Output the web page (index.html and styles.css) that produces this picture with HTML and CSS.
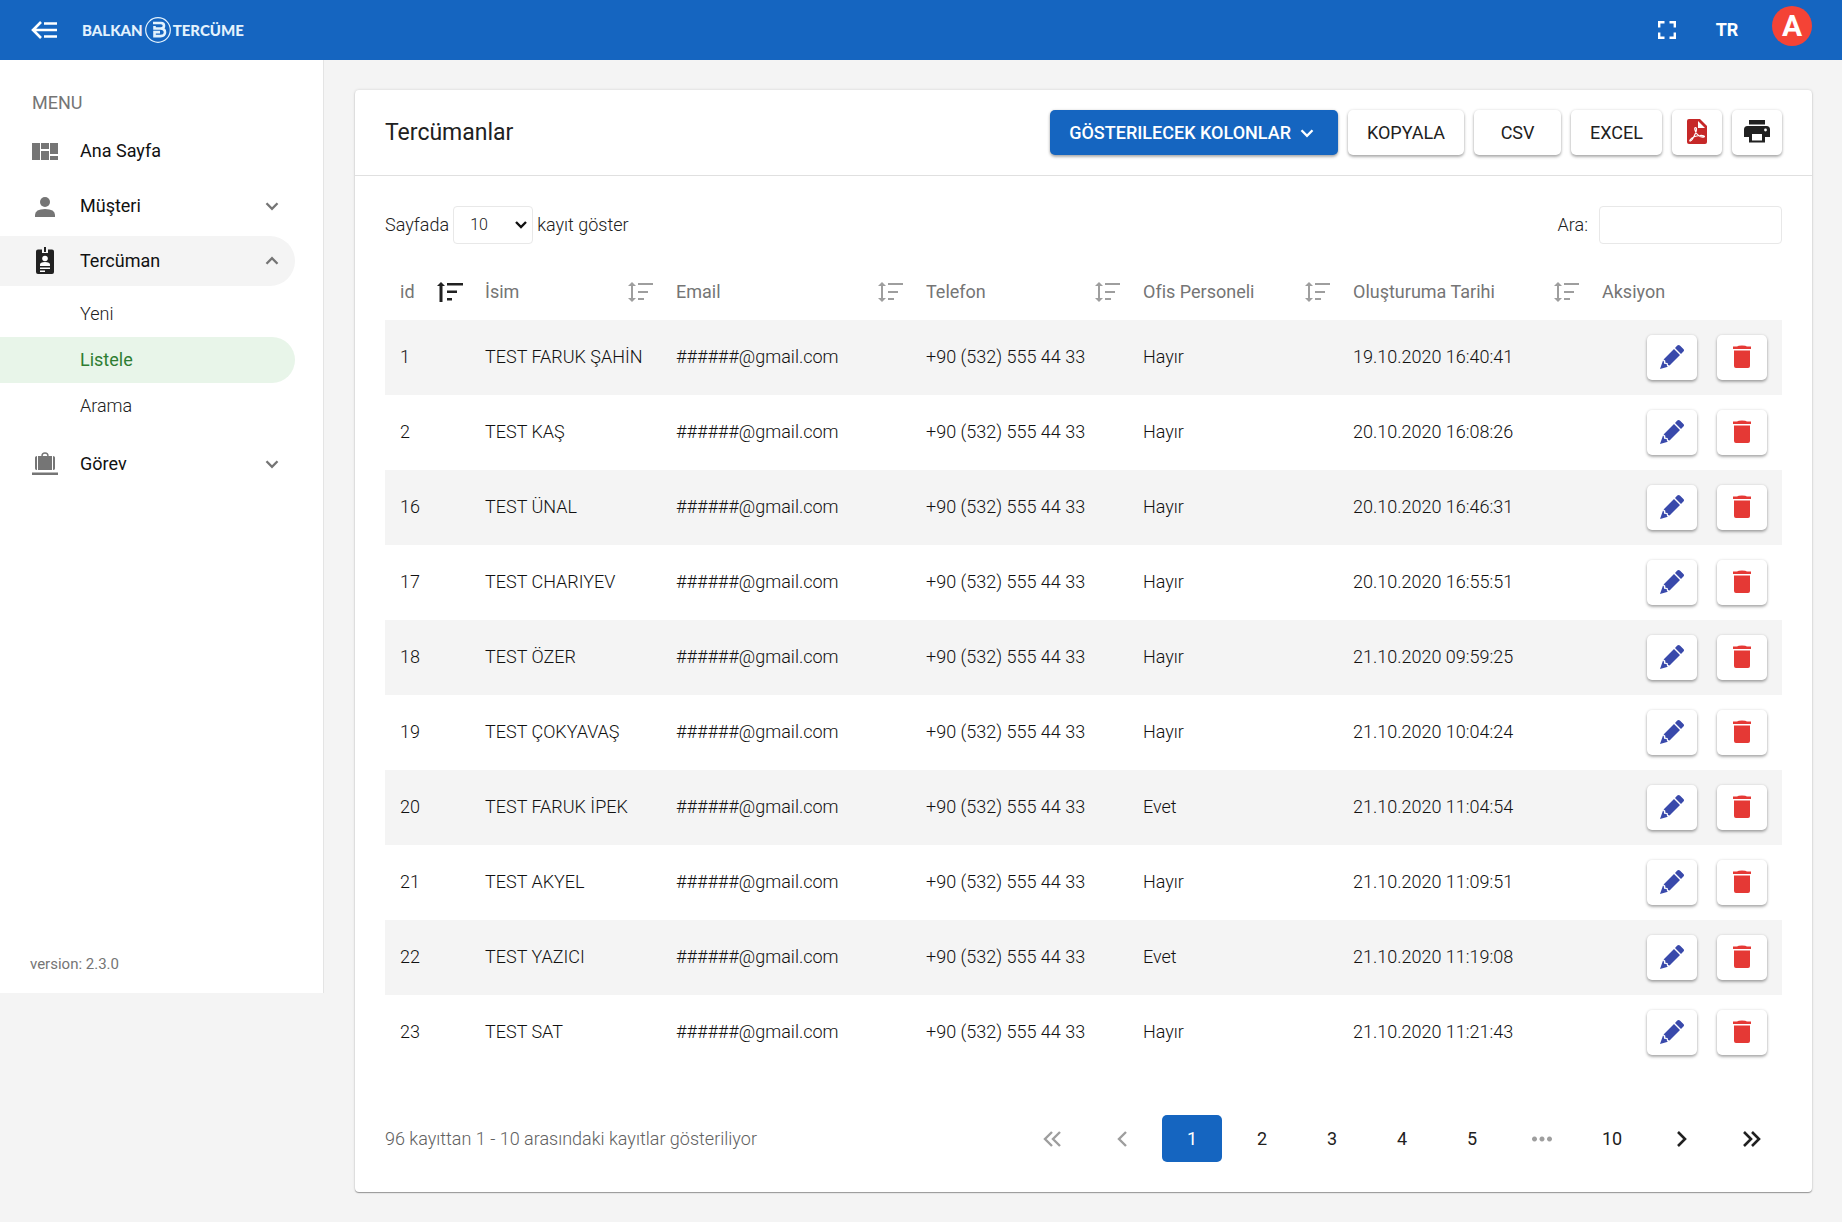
FILE: index.html
```
<!DOCTYPE html>
<html lang="tr">
<head>
    <meta charset="UTF-8">
    <meta name="viewport" content="width=device-width, initial-scale=1">
    <title>Tercümanlar</title>
    <link rel="stylesheet" href="styles.css">
</head>
<body>
<svg class="sprite" aria-hidden="true">
    <symbol id="i-down" viewBox="0 0 24 24"><path d="M6 9l6 6 6-6" fill="none" stroke="currentColor" stroke-width="2.6"/></symbol>
    <symbol id="i-up" viewBox="0 0 24 24"><path d="M6 15l6-6 6 6" fill="none" stroke="currentColor" stroke-width="2.6"/></symbol>
    <symbol id="i-sort" viewBox="0 0 26 20"><path d="M4 0l4 4H5v12h3l-4 4-4-4h3V4H0zM10 1h15v2H10zM10 9h10v2H10zM10 16h6v2h-6z" fill="currentColor"/></symbol>
    <symbol id="i-sort-up" viewBox="0 0 26 20"><path d="M4 0l4 4H5.500v16h-3V4H0zM10 1h16v2.500H10zM10 8.500h10V11H10zM10 16h5v2.500h-5z" fill="currentColor"/></symbol>
    <symbol id="i-edit" viewBox="0 0 24 24">
        <path d="M17.3.6a2 2 0 0 1 2.600 0l3.500 3.500a1.800 1.800 0 0 1 0 2.500L21 9 15 3z M14 4l6 6L9.500 20.500 8 20l-.4-2-2.100-.3-.3-2.200-1.700-1z M3 15.600l.8.6.3 2.600 2.500.3.4 2 .9.6L0 24z" fill="currentColor"/>
    </symbol>
    <symbol id="i-trash" viewBox="0 0 18 24"><path d="M4 1.500Q5 .5 9 .5t5 1h4V4H0V1.500zM1 5.500h16V21a2 2 0 0 1-2 2H3a2 2 0 0 1-2-2z" fill="currentColor"/></symbol>
</svg>

<header class="topbar">
    <button class="icon-btn menu-toggle" type="button" aria-label="Menü">
        <svg width="26" height="18" viewBox="0 0 26 18"><path d="M10 1L2 9l8 8M3 9h23M13 2.500h13M13 15.500h13" fill="none" stroke="currentColor" stroke-width="2.600"/></svg>
    </button>
    <a class="logo" href="#">
        <span>BALKAN</span>
        <svg width="26" height="26" viewBox="0 0 26 26">
            <circle cx="13" cy="13" r="12.300" fill="none" stroke="currentColor" stroke-width="1.200"/>
            <path d="M8 6h8q3 0 3 2.800 0 2.700-3 2.700H9.500V9M15.500 11.500q4.500 0 4.500 3.800t-4.500 3.800H9.500v-4H15" fill="none" stroke="currentColor" stroke-width="2.600"/>
        </svg>
        <span>TERCÜME</span>
    </a>
    <button class="icon-btn fullscreen" type="button" aria-label="Tam ekran">
        <svg width="18" height="18" viewBox="0 0 18 18"><path d="M1.200 6.500V1.200h5.300M11.500 1.200h5.300v5.300M16.800 11.500v5.300h-5.300M6.500 16.800H1.200v-5.300" fill="none" stroke="currentColor" stroke-width="2.400"/></svg>
    </button>
    <button class="icon-btn lang" type="button">TR</button>
    <button class="avatar" type="button">A</button>
</header>

<div class="layout">
    <aside class="sidebar">
        <div class="menu-title">MENU</div>
        <nav class="menu">
            <a class="menu-item" href="#">
                <svg width="26" height="26" viewBox="0 0 26 26"><path d="M0 5h8v17H0zM9 5h8v6H9zM9 13h8v9H9zM18 5h8v11h-8zM18 18h8v4h-8z" fill="currentColor"/></svg>
                <span>Ana Sayfa</span>
            </a>
            <a class="menu-item" href="#">
                <svg width="26" height="26" viewBox="0 0 26 26"><circle cx="13" cy="9" r="5" fill="currentColor"/><path d="M3 24v-2q0-6 10-6t10 6v2z" fill="currentColor"/></svg>
                <span>Müşteri</span>
                <svg class="caret"><use href="#i-down"/></svg>
            </a>
            <a class="menu-item open" href="#">
                <svg width="26" height="28" viewBox="0 0 26 28">
                    <path d="M6 2.500h4V6h6V2.500h4a2 2 0 0 1 2 2V25a2 2 0 0 1-2 2H6a2 2 0 0 1-2-2V4.500a2 2 0 0 1 2-2z" fill="currentColor"/>
                    <path d="M12 0h2v5h-2z" fill="currentColor"/>
                    <circle cx="13" cy="11.500" r="2.800" fill="#fff"/>
                    <path d="M8 19v-1.500q0-2.500 5-2.500t5 2.500V19zM8 20.500h10V22H8zM8 23.500h5V25H8z" fill="#fff"/>
                </svg>
                <span>Tercüman</span>
                <svg class="caret"><use href="#i-up"/></svg>
            </a>
            <div class="submenu">
                <a href="#">Yeni</a>
                <a class="active" href="#">Listele</a>
                <a href="#">Arama</a>
            </div>
            <a class="menu-item" href="#">
                <svg width="26" height="26" viewBox="0 0 26 26">
                    <path d="M6 5h14v14H6zM3 6.500Q3 5 5 5v14q-2 0-2-1.500zM23 6.500Q23 5 21 5v14q2 0 2-1.500zM0 21.500h26V24H0z" fill="currentColor"/>
                    <path d="M10 5q0-3 3-3t3 3" fill="none" stroke="currentColor" stroke-width="1.400"/>
                </svg>
                <span>Görev</span>
                <svg class="caret"><use href="#i-down"/></svg>
            </a>
        </nav>
        <div class="version">version: 2.3.0</div>
    </aside>

    <main class="content">
        <section class="card">
            <div class="card-header">
                <h1>Tercümanlar</h1>
                <div class="buttons">
                    <button class="btn btn-primary" type="button">GÖSTERILECEK KOLONLAR <svg class="caret"><use href="#i-down"/></svg></button>
                    <button class="btn" type="button">KOPYALA</button>
                    <button class="btn" type="button">CSV</button>
                    <button class="btn" type="button">EXCEL</button>
                    <button class="btn btn-icon" type="button" aria-label="PDF">
                        <svg width="20" height="25" viewBox="0 0 20 25">
                            <path d="M2 0h11l7 7v16a2 2 0 0 1-2 2H2a2 2 0 0 1-2-2V2a2 2 0 0 1 2-2z" fill="#c62828"/>
                            <path d="M11 2v7h7z" fill="#fff"/>
                            <path d="M8.500 8.500c-1.500 0-.5 4 1.500 6.500s5 3.500 7 3c1.500-.8-1-1.800-4-1.500-4 .3-8.500 2.500-10 4.500-.8 1.500 1 1.500 2.500-1S9.500 12 9.500 10q0-1.500-1-1.500z" fill="none" stroke="#fff" stroke-width="1.200"/>
                        </svg>
                    </button>
                    <button class="btn btn-icon" type="button" aria-label="Yazdır">
                        <svg width="26" height="24" viewBox="0 0 26 24">
                            <path d="M5 1h16v4.500H5zM3.500 7h19A3.500 3.500 0 0 1 26 10.500V18h-5v5.500H5V18H0v-7.500A3.500 3.500 0 0 1 3.500 7z" fill="currentColor"/>
                            <path d="M8 15h10v6.500H8z" fill="#fff"/><circle cx="21.500" cy="11" r="1.400" fill="#fff"/>
                        </svg>
                    </button>
                </div>
            </div>

            <div class="card-body">
                <div class="filters">
                    <label class="length">Sayfada
                        <select><option>10</option><option>25</option><option>50</option></select>
                        kayıt göster
                    </label>
                    <label class="search">Ara: <input type="search"></label>
                </div>

                <table class="table">
                    <colgroup>
                        <col class="c-id"><col class="c-name"><col class="c-mail"><col class="c-tel"><col class="c-office"><col class="c-date"><col class="c-act">
                    </colgroup>
                    <thead>
                    <tr>
                        <th><div class="th sorted">id <svg><use href="#i-sort-up"/></svg></div></th>
                        <th><div class="th">İsim <svg><use href="#i-sort"/></svg></div></th>
                        <th><div class="th">Email <svg><use href="#i-sort"/></svg></div></th>
                        <th><div class="th">Telefon <svg><use href="#i-sort"/></svg></div></th>
                        <th><div class="th">Ofis Personeli <svg><use href="#i-sort"/></svg></div></th>
                        <th><div class="th">Oluşturuma Tarihi <svg><use href="#i-sort"/></svg></div></th>
                        <th><div class="th">Aksiyon</div></th>
                    </tr>
                    </thead>
                    <tbody>
                    <tr>
                        <td>1</td><td>TEST FARUK ŞAHİN</td><td>######@gmail.com</td><td>+90 (532) 555 44 33</td><td>Hayır</td><td>19.10.2020 16:40:41</td>
                        <td><div class="actions"><button class="btn btn-icon edit" type="button" aria-label="Düzenle"><svg><use href="#i-edit"/></svg></button><button class="btn btn-icon delete" type="button" aria-label="Sil"><svg><use href="#i-trash"/></svg></button></div></td>
                    </tr>
                    <tr>
                        <td>2</td><td>TEST KAŞ</td><td>######@gmail.com</td><td>+90 (532) 555 44 33</td><td>Hayır</td><td>20.10.2020 16:08:26</td>
                        <td><div class="actions"><button class="btn btn-icon edit" type="button" aria-label="Düzenle"><svg><use href="#i-edit"/></svg></button><button class="btn btn-icon delete" type="button" aria-label="Sil"><svg><use href="#i-trash"/></svg></button></div></td>
                    </tr>
                    <tr>
                        <td>16</td><td>TEST ÜNAL</td><td>######@gmail.com</td><td>+90 (532) 555 44 33</td><td>Hayır</td><td>20.10.2020 16:46:31</td>
                        <td><div class="actions"><button class="btn btn-icon edit" type="button" aria-label="Düzenle"><svg><use href="#i-edit"/></svg></button><button class="btn btn-icon delete" type="button" aria-label="Sil"><svg><use href="#i-trash"/></svg></button></div></td>
                    </tr>
                    <tr>
                        <td>17</td><td>TEST CHARIYEV</td><td>######@gmail.com</td><td>+90 (532) 555 44 33</td><td>Hayır</td><td>20.10.2020 16:55:51</td>
                        <td><div class="actions"><button class="btn btn-icon edit" type="button" aria-label="Düzenle"><svg><use href="#i-edit"/></svg></button><button class="btn btn-icon delete" type="button" aria-label="Sil"><svg><use href="#i-trash"/></svg></button></div></td>
                    </tr>
                    <tr>
                        <td>18</td><td>TEST ÖZER</td><td>######@gmail.com</td><td>+90 (532) 555 44 33</td><td>Hayır</td><td>21.10.2020 09:59:25</td>
                        <td><div class="actions"><button class="btn btn-icon edit" type="button" aria-label="Düzenle"><svg><use href="#i-edit"/></svg></button><button class="btn btn-icon delete" type="button" aria-label="Sil"><svg><use href="#i-trash"/></svg></button></div></td>
                    </tr>
                    <tr>
                        <td>19</td><td>TEST ÇOKYAVAŞ</td><td>######@gmail.com</td><td>+90 (532) 555 44 33</td><td>Hayır</td><td>21.10.2020 10:04:24</td>
                        <td><div class="actions"><button class="btn btn-icon edit" type="button" aria-label="Düzenle"><svg><use href="#i-edit"/></svg></button><button class="btn btn-icon delete" type="button" aria-label="Sil"><svg><use href="#i-trash"/></svg></button></div></td>
                    </tr>
                    <tr>
                        <td>20</td><td>TEST FARUK İPEK</td><td>######@gmail.com</td><td>+90 (532) 555 44 33</td><td>Evet</td><td>21.10.2020 11:04:54</td>
                        <td><div class="actions"><button class="btn btn-icon edit" type="button" aria-label="Düzenle"><svg><use href="#i-edit"/></svg></button><button class="btn btn-icon delete" type="button" aria-label="Sil"><svg><use href="#i-trash"/></svg></button></div></td>
                    </tr>
                    <tr>
                        <td>21</td><td>TEST AKYEL</td><td>######@gmail.com</td><td>+90 (532) 555 44 33</td><td>Hayır</td><td>21.10.2020 11:09:51</td>
                        <td><div class="actions"><button class="btn btn-icon edit" type="button" aria-label="Düzenle"><svg><use href="#i-edit"/></svg></button><button class="btn btn-icon delete" type="button" aria-label="Sil"><svg><use href="#i-trash"/></svg></button></div></td>
                    </tr>
                    <tr>
                        <td>22</td><td>TEST YAZICI</td><td>######@gmail.com</td><td>+90 (532) 555 44 33</td><td>Evet</td><td>21.10.2020 11:19:08</td>
                        <td><div class="actions"><button class="btn btn-icon edit" type="button" aria-label="Düzenle"><svg><use href="#i-edit"/></svg></button><button class="btn btn-icon delete" type="button" aria-label="Sil"><svg><use href="#i-trash"/></svg></button></div></td>
                    </tr>
                    <tr>
                        <td>23</td><td>TEST SAT</td><td>######@gmail.com</td><td>+90 (532) 555 44 33</td><td>Hayır</td><td>21.10.2020 11:21:43</td>
                        <td><div class="actions"><button class="btn btn-icon edit" type="button" aria-label="Düzenle"><svg><use href="#i-edit"/></svg></button><button class="btn btn-icon delete" type="button" aria-label="Sil"><svg><use href="#i-trash"/></svg></button></div></td>
                    </tr>
                    </tbody>
                </table>

                <div class="table-footer">
                    <div class="info">96 kayıttan 1 - 10 arasındaki kayıtlar gösteriliyor</div>
                    <nav class="pagination" aria-label="Sayfalar">
                        <a class="disabled" href="#" aria-label="İlk"><svg width="18" height="16" viewBox="0 0 18 16"><path d="M9 1L2 8l7 7M17 1l-7 7 7 7" fill="none" stroke="currentColor" stroke-width="2.400"/></svg></a>
                        <a class="disabled" href="#" aria-label="Önceki"><svg width="18" height="16" viewBox="0 0 18 16"><path d="M13 1L6 8l7 7" fill="none" stroke="currentColor" stroke-width="2.400"/></svg></a>
                        <a class="current" href="#">1</a>
                        <a href="#">2</a>
                        <a href="#">3</a>
                        <a href="#">4</a>
                        <a href="#">5</a>
                        <a class="disabled" href="#" aria-label="Diğer sayfalar"><svg width="20" height="6" viewBox="0 0 20 6"><path d="M2.500.5a2.500 2.500 0 1 0 .01 0zM10 .5a2.500 2.500 0 1 0 .01 0zM17.500.5a2.500 2.500 0 1 0 .01 0z" fill="currentColor"/></svg></a>
                        <a href="#">10</a>
                        <a href="#" aria-label="Sonraki"><svg width="18" height="16" viewBox="0 0 18 16"><path d="M5 1l7 7-7 7" fill="none" stroke="currentColor" stroke-width="2.600"/></svg></a>
                        <a href="#" aria-label="Son"><svg width="18" height="16" viewBox="0 0 18 16"><path d="M1 1l7 7-7 7M9 1l7 7-7 7" fill="none" stroke="currentColor" stroke-width="2.600"/></svg></a>
                    </nav>
                </div>
            </div>
        </section>
    </main>
</div>
</body>
</html>
```
FILE: styles.css
```
* {
    box-sizing: border-box;
}

body {
    margin: 0;
    background: #f4f4f4;
    color: #212121;
    font: 300 18px/24px Roboto, "Liberation Sans", sans-serif;
}

a {
    color: inherit;
    text-decoration: none;
}

button, input, select {
    font: inherit;
    color: inherit;
}

svg {
    display: block;
    flex: none;
}

.sprite {
    display: none;
}

.caret {
    width: 24px;
    height: 24px;
    padding: 1px;
}

/* topbar */
.topbar {
    display: flex;
    align-items: center;
    height: 60px;
    padding: 0 30px 0 31px;
    background: #1565c0;
    color: #fff;
}

.icon-btn {
    display: flex;
    justify-content: center;
    padding: 0;
    border: 0;
    background: none;
}

.logo {
    display: flex;
    align-items: center;
    gap: 2px;
    margin-left: 25px;
    color: #e3f2fd;
    font-family: Lato, sans-serif;
    font-size: 15px;
    font-weight: 900;
}

.fullscreen {
    width: 60px;
    margin-left: auto;
}

.lang {
    width: 60px;
    font-weight: 700;
}

.avatar {
    width: 40px;
    height: 40px;
    margin: 0 0 8px 15px;
    padding: 0;
    border: 0;
    border-radius: 50%;
    background: #f44336;
    font-size: 30px;
    font-weight: 700;
    line-height: 40px;
}

/* sidebar */
.layout {
    display: flex;
    align-items: flex-start;
}

.sidebar {
    display: flex;
    flex: none;
    flex-direction: column;
    width: 324px;
    min-height: 933px;
    padding: 31px 0 17px;
    border-right: 1px solid #e4e4e4;
    background: #fff;
}

.menu-title {
    padding-left: 32px;
    color: #757575;
    font-weight: 400;
}

.menu {
    display: flex;
    flex-direction: column;
    gap: 5px;
    margin: 11px 28px 0 0;
}

.menu-item {
    display: flex;
    align-items: center;
    gap: 22px;
    height: 50px;
    padding: 0 11px 0 32px;
    border-radius: 0 25px 25px 0;
    color: #111;
    font-weight: 400;
}

.menu-item svg {
    color: #757575;
}

.menu-item .caret {
    margin-left: auto;
}

.menu-item.open {
    background: #f4f4f4;
}

.menu-item.open svg:first-child {
    color: #212121;
}

.submenu {
    margin-bottom: 5px;
}

.submenu a {
    display: block;
    padding: 11px 0 11px 80px;
    border-radius: 0 23px 23px 0;
}

.submenu .active {
    background: #e8f5e9;
    color: #2e7d32;
    font-weight: 400;
}

.version {
    margin-top: auto;
    padding-left: 30px;
    color: #757575;
    font-size: 15px;
    font-weight: 400;
}

/* card */
.content {
    flex: 1;
    min-width: 0;
    padding: 30px 30px 30px 31px;
}

.card {
    border-radius: 4px;
    background: #fff;
    box-shadow: 0 1px 1px rgba(0, 0, 0, .35), 0 0 3px rgba(0, 0, 0, .15);
}

.card-header {
    display: flex;
    align-items: center;
    justify-content: space-between;
    padding: 20px 30px;
    border-bottom: 1px solid #e0e0e0;
}

.card-header h1 {
    margin: 0;
    font-size: 23px;
    font-weight: 400;
    line-height: 30px;
}

.buttons {
    display: flex;
    gap: 10px;
}

.btn {
    display: flex;
    align-items: center;
    justify-content: center;
    min-width: 87px;
    height: 45px;
    padding: 0 19px;
    border: 0;
    border-radius: 5px;
    background: #fff;
    box-shadow: 0 2px 3px rgba(0, 0, 0, .3), 0 0 3px rgba(0, 0, 0, .12);
    font-weight: 400;
}

.btn-primary {
    gap: 4px;
    background: #1565c0;
    color: #fff;
    font-weight: 500;
}

.btn-icon {
    min-width: 0;
    width: 50px;
    padding: 0 0 3px;
}

.card-body {
    padding: 30px;
}

.filters {
    display: flex;
    justify-content: space-between;
    margin-bottom: 19px;
}

.length, .search {
    display: flex;
    align-items: center;
    gap: 4px;
}

.search {
    gap: 11px;
}

.length select, .search input {
    height: 38px;
    border: 1px solid #e8e8e8;
    border-radius: 4px;
}

.length select {
    width: 80px;
    padding: 0 0 0 16px;
    appearance: none;
    background: #fff url("data:image/svg+xml,%3Csvg xmlns='http://www.w3.org/2000/svg' width='12' height='8'%3E%3Cpath d='M1 1l5 5 5-5' fill='none' stroke='%23111' stroke-width='2.400'/%3E%3C/svg%3E") no-repeat right 5px center;
    font-size: 16px;
    font-weight: 300;
}

.search input {
    width: 183px;
    padding: 0 10px;
    background: #fff;
}

/* table */
.table {
    width: 100%;
    table-layout: fixed;
    border-collapse: collapse;
}

.c-id { width: 85px; }
.c-name { width: 191px; }
.c-mail { width: 250px; }
.c-tel { width: 217px; }
.c-office { width: 210px; }
.c-date { width: 249px; }
.c-act { width: 195px; }

.table th {
    height: 57px;
    padding: 0 7px 0 15px;
    color: #757575;
    font-weight: 400;
    text-align: left;
}

.th {
    display: flex;
    align-items: center;
    justify-content: space-between;
}

.th svg {
    width: 26px;
    height: 20px;
    color: #9e9e9e;
}

.th.sorted svg {
    color: #212121;
}

.table td {
    padding: 15px 15px 17px;
    color: #111;
}

.table td:last-child {
    padding-bottom: 15px;
}

.table tbody tr:nth-child(odd) {
    background: #f4f4f4;
}

.actions {
    display: flex;
    justify-content: flex-end;
    gap: 20px;
}

.actions .btn {
    padding-bottom: 1px;
}

.edit svg {
    width: 24px;
    height: 24px;
    color: #3949ab;
}

.delete svg {
    width: 18px;
    height: 24px;
    color: #e53935;
}

/* footer */
.table-footer {
    display: flex;
    align-items: center;
    justify-content: space-between;
    margin-top: 45px;
}

.info {
    color: #616161;
}

.pagination {
    display: flex;
    gap: 10px;
}

.pagination a {
    display: flex;
    align-items: center;
    justify-content: center;
    width: 60px;
    height: 47px;
    border-radius: 5px;
    font-weight: 400;
}

.pagination .disabled {
    color: #9e9e9e;
}

.pagination .current {
    background: #1565c0;
    color: #fff;
}
```
